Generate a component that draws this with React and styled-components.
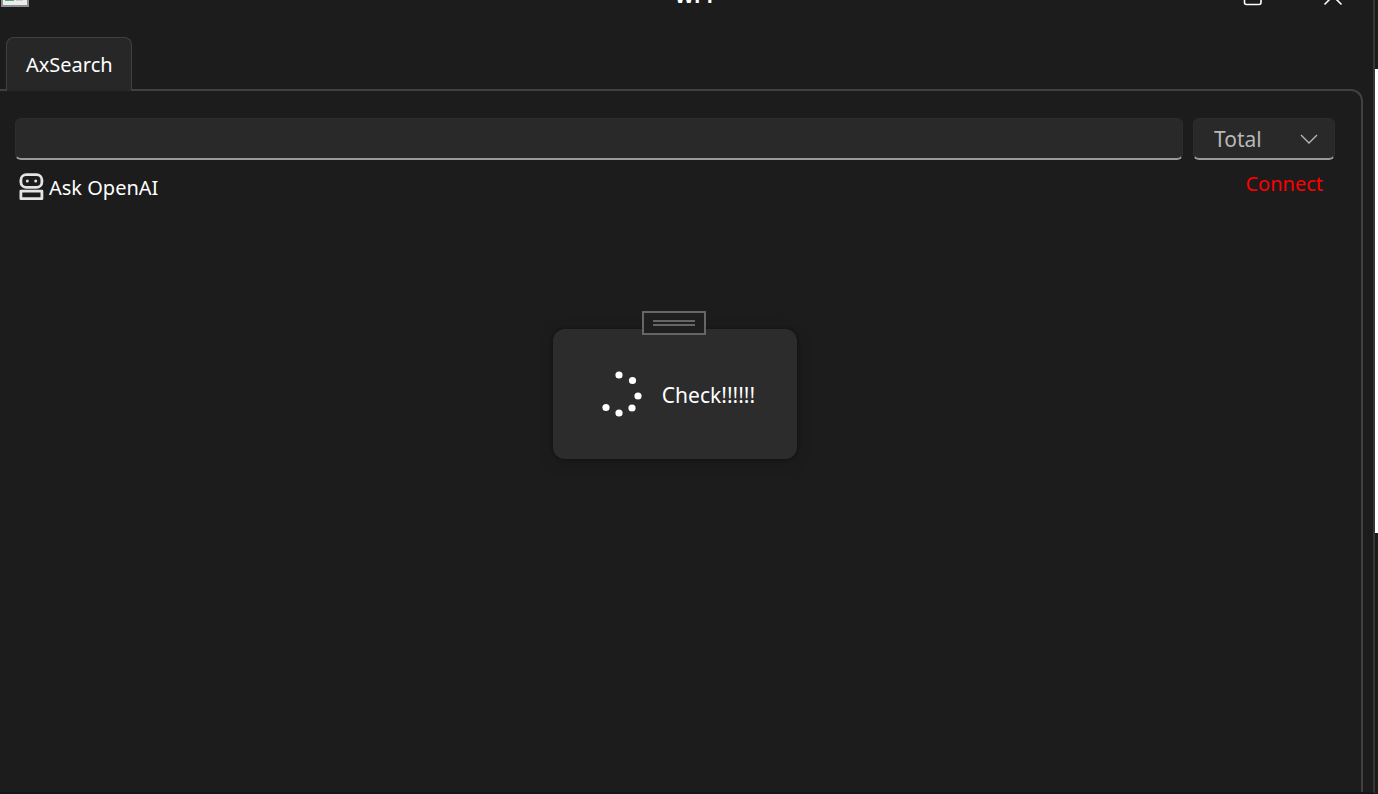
import React, {useState} from 'react';
import styled, {createGlobalStyle} from 'styled-components';

const GlobalStyle = createGlobalStyle`
  *, *::before {
    box-sizing: border-box;
  }

  body {
    margin: 0;
    background: #1c1c1c;
    color: #fff;
    font-family: "Noto Sans", "Open Sans", sans-serif;
    font-size: 20px;
    line-height: 28px;
  }

  button, input, select {
    font: inherit;
    color: inherit;
  }
`;

const Desktop = styled.div`
  display: flex;
  height: 100vh;
  overflow: hidden;
`;

const Window = styled.div`
  position: relative;
  flex: auto;
  display: flex;
  flex-direction: column;
  padding-right: 10px;
  background: #1c1c1c;
  border-right: 2px solid #363636;
  border-bottom: 2px solid #171515;
`;

const Behind = styled.div`
  flex: 0 0 3px;
  display: flex;
  flex-direction: column;
  padding-top: 69px;
  background: #1d1c1b;
`;

const BehindPage = styled.div`
  height: 464px;
  background: #fff;
`;

const TitleBar = styled.header`
  display: grid;
  grid-template-columns: 1fr auto 1fr;
  align-items: end;
  height: 40px;
  margin: -33px 0 30px;
  padding: 0 20px 0 1px;

  > svg {
    display: block;
  }
`;

const Title = styled.h1`
  margin: 0 0 0 48px;
  padding-bottom: 4px;
  font-size: 20px;
  font-weight: 700;
  line-height: 14px;
`;

const WindowButtons = styled.div`
  display: flex;
  justify-content: flex-end;
  gap: 60px;
  padding-bottom: 1px;
`;

const CaptionButton = styled.button`
  display: flex;
  padding: 0;
  border: 0;
  background: none;
`;

const TabStrip = styled.nav`
  display: flex;
  padding-left: 6px;
`;

const Tab = styled.button`
  position: relative;
  height: 54px;
  margin-bottom: -2px;
  padding: 1px 18px 0 19px;
  background: #272727;
  border: 1px solid #404040;
  border-bottom: 0;
  border-radius: 8px 8px 0 0;
`;

const Panel = styled.main`
  flex: auto;
  padding: 27px 26px 0 15px;
  border: 2px solid #404040;
  border-width: 2px 2px 0 0;
  border-radius: 0 12px 0 0;
`;

const SearchRow = styled.div`
  display: flex;
  gap: 10px;
`;

const field = `
  height: 42px;
  background: #292929;
  border: 1px solid #2d2d2d;
  border-bottom: 2px solid #9a9a9a;
  border-radius: 6px;
  outline: none;
`;

const SearchInput = styled.input`
  ${field}
  flex: auto;
  min-width: 0;
  padding: 0 12px;
`;

const SelectBox = styled.label`
  display: grid;
  flex: 0 0 142px;
  align-items: center;

  > * {
    grid-area: 1 / 1;
  }

  > svg {
    justify-self: end;
    margin-right: 17px;
    pointer-events: none;
  }
`;

const Select = styled.select`
  ${field}
  appearance: none;
  padding: 0 20px;
  color: #b8b8b8;
  font-size: 21px;
`;

const ActionRow = styled.div`
  display: flex;
  justify-content: space-between;
  align-items: flex-start;
  padding: 10px 12px 0 4px;
`;

const AskButton = styled.button`
  display: flex;
  align-items: center;
  gap: 5px;
  padding: 2px 0 0;
  border: 0;
  background: none;

  > span {
    padding-top: 2px;
  }
`;

const ConnectButton = styled.button`
  padding: 0;
  border: 0;
  background: none;
  color: #f00;
`;

const Overlay = styled.div`
  position: absolute;
  inset: 0 23px 4px 0;
  display: flex;
  align-items: center;
  justify-content: center;
  pointer-events: none;
`;

const Dialog = styled.div`
  position: relative;
  display: flex;
  align-items: center;
  gap: 20px;
  padding: 41px 42px 41px 48px;
  background: #2c2c2c;
  border-radius: 12px;
  box-shadow: 0 0 2px 2px rgba(0, 0, 0, 0.15), 0 4px 16px rgba(0, 0, 0, 0.15);
`;

const Message = styled.span`
  padding-top: 2px;
  font-size: 21px;
`;

const Grip = styled.div`
  position: absolute;
  top: -18px;
  left: calc(50% - 33px);
  display: flex;
  align-items: center;
  justify-content: center;
  width: 64px;
  height: 24px;
  background: #1f1f1f;
  border: 2px solid #666;

  &::before {
    content: '';
    width: 42px;
    height: 6px;
    border: 2px solid #666;
    border-width: 2px 0;
  }
`;

const dots = [[18, 5], [31.5, 10.5], [37, 26], [31, 38], [18, 43], [5, 37.5]];

function Spinner() {
  return <svg width="41" height="48" viewBox="0 0 41 48" fill="#fff">
    {dots.map(([x, y]) => <circle key={`${x}-${y}`} cx={x} cy={y} r="3.6" />)}
  </svg>;
}

function AppIcon() {
  return <svg width="28" height="28" viewBox="0 0 28 28">
    <rect width="28" height="28" fill="#8b8d92" />
    <rect x="2" y="2" width="24" height="24" fill="#ececec" />
    <rect x="4" y="10" width="9" height="12" fill="#4caa72" />
    <rect x="15" y="10" width="7" height="12" fill="#ccc" />
  </svg>;
}

function RobotIcon() {
  return <svg width="25" height="28" viewBox="0 0 25 28" fill="none" stroke="#e4e4e4" strokeWidth="2.8">
    <rect x="1.9" y="1.7" width="21" height="12.6" rx="5.4" />
    <path d="M1.9 18.1h21v7.6h-21z" strokeLinejoin="round" />
    <circle cx="8.3" cy="8" r="1.5" fill="#e4e4e4" stroke="none" />
    <circle cx="16.7" cy="8" r="1.5" fill="#e4e4e4" stroke="none" />
  </svg>;
}

function ChevronIcon() {
  return <svg width="18" height="10" viewBox="0 0 18 10" fill="none" stroke="#b8b8b8" strokeWidth="1.3">
    <path d="M1 1l8 8 8-8" />
  </svg>;
}

function Caption() {
  return <TitleBar>
    <AppIcon />
    <Title>WPF</Title>
    <WindowButtons>
      <CaptionButton aria-label="Maximize">
        <svg width="20" height="20" viewBox="0 0 20 20" fill="none" stroke="#fff" strokeWidth="1.6">
          <rect x="1.5" y="1.5" width="16.5" height="17" rx="2" />
        </svg>
      </CaptionButton>
      <CaptionButton aria-label="Close">
        <svg width="20" height="20" viewBox="0 0 20 20" fill="none" stroke="#fff" strokeWidth="1.6">
          <path d="M1.5 1.5l17 17M18.5 1.5l-17 17" />
        </svg>
      </CaptionButton>
    </WindowButtons>
  </TitleBar>;
}

function SearchBar() {
  const [query, setQuery] = useState('');

  return <SearchRow>
    <SearchInput aria-label="Search" value={query} onChange={e => setQuery(e.target.value)} />
    <SelectBox>
      <Select aria-label="Category" defaultValue="Total">
        <option>Total</option>
      </Select>
      <ChevronIcon />
    </SelectBox>
  </SearchRow>;
}

function App() {
  return (
    <Desktop>
      <GlobalStyle />
      <Window>
        <Caption />
        <TabStrip>
          <Tab>AxSearch</Tab>
        </TabStrip>
        <Panel>
          <SearchBar />
          <ActionRow>
            <AskButton><RobotIcon /><span>Ask OpenAI</span></AskButton>
            <ConnectButton>Connect</ConnectButton>
          </ActionRow>
        </Panel>
        <Overlay>
          <Dialog role="status">
            <Grip />
            <Spinner />
            <Message>Check!!!!!!</Message>
          </Dialog>
        </Overlay>
      </Window>
      <Behind>
        <BehindPage />
      </Behind>
    </Desktop>
  );
}

export default App;
